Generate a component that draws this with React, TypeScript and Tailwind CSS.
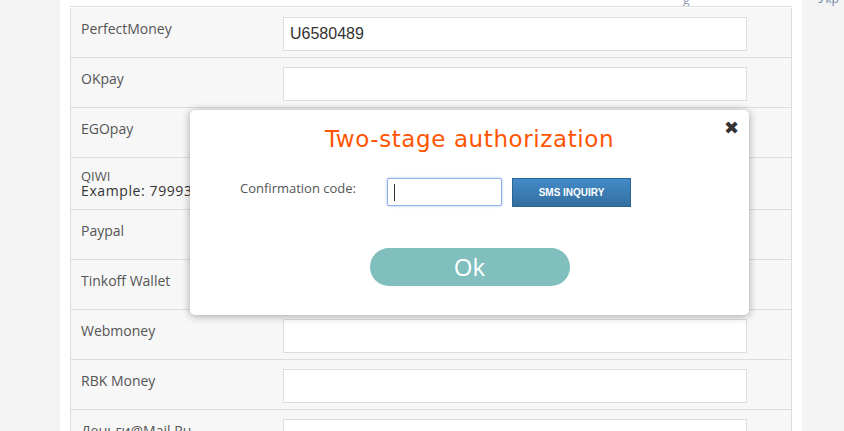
import React from 'react'

const rows = [
  { label: 'PerfectMoney', value: 'U6580489' },
  { label: 'OKpay', value: '' },
  { label: 'EGOpay', value: '' },
  { label: 'QIWI', value: '', hint: 'Example: 79993332211' },
  { label: 'Paypal', value: '' },
  { label: 'Tinkoff Wallet', value: '' },
  { label: 'Webmoney', value: '' },
  { label: 'RBK Money', value: '' },
  { label: 'Деньги@Mail.Ru', value: '' },
]

function Row({ label, value, hint }: { label: string; value: string; hint?: string }) {
  return (
    <div className={`flex border-b border-[#dddddd] ${hint ? 'h-[52px]' : 'h-[50px]'}`}>
      <div className="w-[212px] shrink-0 pl-[10px] pt-[12px] text-[14px] leading-[18px] text-[#555]">
        {hint ? (
          <div className="flex flex-col gap-[1px]">
            <div className="text-[13px] leading-[13px]">{label}</div>
            <div className="text-[14px] leading-[14px] tracking-[0.6px] text-[#333] whitespace-nowrap">{hint}</div>
          </div>
        ) : (
          <div>{label}</div>
        )}
      </div>
      <div className="pt-[9px]">
        <div className="flex h-[34px] w-[464px] items-center border border-[#dddddd] bg-white px-[6px] font-['Liberation_Sans',Arial,sans-serif] text-[16px] text-[#333]">
          {value}
        </div>
      </div>
    </div>
  )
}

export default function App() {
  return (
    <div className="relative h-[431px] w-[844px] overflow-hidden bg-[#f3f3f3] font-['Open_Sans',sans-serif]">
      <div className="ml-[60px] h-full w-[742px] bg-white px-[10px]">
        <div className="relative h-[7px] overflow-hidden border-b border-[#dddddd]">
          <span className="absolute left-[613px] -top-[9px] text-[12px] text-[#8a9bb0]">g</span>
        </div>
        <div className="mt-[1px] border-x border-[#dddddd] bg-[#f7f7f7]">
          {rows.map((r) => (
            <Row key={r.label} {...r} />
          ))}
        </div>
      </div>
      <span className="absolute left-[818px] -top-[10px] text-[12px] text-[#6f87a8]">Укр</span>

      <div className="absolute left-[190px] top-[110px] h-[205px] w-[559px] rounded-[5px] bg-white shadow-[0_1px_8px_rgba(0,0,0,0.35)]">
        <div className="absolute right-[10px] top-[9px] font-['DejaVu_Sans',sans-serif] text-[18px] leading-none text-[#333]">✖</div>
        <div className="pt-[14px] text-center font-['DejaVu_Sans',sans-serif] text-[23px] leading-[30px] tracking-[0.6px] text-[#ff5500]">
          Two-stage authorization
        </div>
        <div className="mt-[24px] flex items-start">
          <div className="ml-[50px] w-[147px] pt-[1px] text-[13px] text-[#555]">Confirmation code:</div>
          <div className="flex h-[28px] w-[115px] items-center rounded-[2px] border border-[#8fb0ee] bg-white pl-[6px] shadow-[0_0_3px_rgba(90,140,230,0.5)]">
            <div className="h-[17px] w-[1px] bg-[#333]" />
          </div>
          <div className="ml-[10px] flex h-[29px] w-[119px] items-center justify-center border border-[#2c6592] bg-gradient-to-b from-[#428bca] to-[#346f9e] font-['Liberation_Sans',Arial,sans-serif] text-[10px] font-bold text-white">
            SMS INQUIRY
          </div>
        </div>
        <div className="mt-[41px] flex justify-center">
          <div className="flex h-[38px] w-[200px] items-center justify-center rounded-full bg-[#81bfbf] text-[24px] text-white">
            Ok
          </div>
        </div>
      </div>
    </div>
  )
}
